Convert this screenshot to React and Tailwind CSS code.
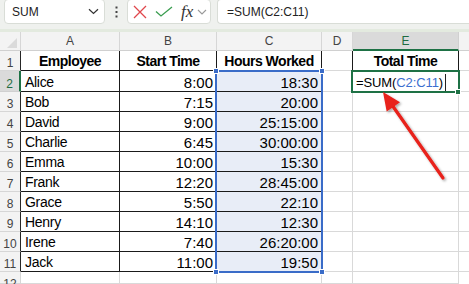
import React from "react";

const data = [
  ["Alice", "8:00", "18:30"],
  ["Bob", "7:15", "20:00"],
  ["David", "9:00", "25:15:00"],
  ["Charlie", "6:45", "30:00:00"],
  ["Emma", "10:00", "15:30"],
  ["Frank", "12:20", "28:45:00"],
  ["Grace", "5:50", "22:10"],
  ["Henry", "14:10", "12:30"],
  ["Irene", "7:40", "26:20:00"],
  ["Jack", "11:00", "19:50"],
];

function ColHead({ label }) {
  if (label === "E") {
    return (
      <div className="bg-[#dadada] border-r border-r-[#d0d0d0] border-b-2 border-b-[#1e7145] flex items-center justify-center text-[12px] leading-[14px] text-[#1e6b42]">
        E
      </div>
    );
  }
  return (
    <div className="bg-[#f3f3f3] border-r border-r-[#d6d6d6] border-b border-b-[#d0d0d0] flex items-center justify-center text-[12px] leading-[14px] text-[#444]">
      {label}
    </div>
  );
}

function RowHead({ n }) {
  if (n === 2) {
    return (
      <div className="bg-[#dadada] border-r-2 border-r-[#1e7145] border-b border-b-[#d0d0d0] flex items-end justify-center text-[12px] leading-[14px] text-[#1e6b42]">
        2
      </div>
    );
  }
  if (n <= 11) {
    return (
      <div className="bg-[#f3f3f3] border-r border-r-[#262626] border-b border-b-[#d6d6d6] flex items-end justify-center text-[12px] leading-[14px] text-[#444]">
        {n}
      </div>
    );
  }
  return (
    <div className="bg-[#f3f3f3] border-r border-r-[#d6d6d6] border-b border-b-[#d6d6d6] flex items-start pt-[5px] justify-center text-[12px] leading-[14px] text-[#444]">
      {n}
    </div>
  );
}

function TableHeadCell({ children }) {
  return (
    <div className="border-r border-b border-[#1a1a1a] flex items-end justify-center text-[14px] leading-[17px] font-bold tracking-[-0.5px] text-black whitespace-nowrap overflow-hidden">
      {children}
    </div>
  );
}

function NameCell({ children }) {
  return (
    <div className="border-r border-b border-[#1a1a1a] flex items-end pl-[4px] text-[14px] leading-[17px] tracking-[-0.3px] text-black whitespace-nowrap overflow-hidden">
      {children}
    </div>
  );
}

function NumCell({ children, sel }) {
  return (
    <div
      className={
        sel
          ? "bg-[#e8edf7] border-r border-b border-[#1a1a1a] flex items-end justify-end pr-[3px] text-[15px] leading-[17px] text-black whitespace-nowrap overflow-hidden"
          : "border-r border-b border-[#1a1a1a] flex items-end justify-end pr-[3px] text-[15px] leading-[17px] text-black whitespace-nowrap overflow-hidden"
      }
    >
      {children}
    </div>
  );
}

function Blank({ darkRight }) {
  return (
    <div
      className={
        darkRight
          ? "border-r border-r-[#1a1a1a] border-b border-b-[#d9d9d9]"
          : "border-r border-r-[#d9d9d9] border-b border-b-[#d9d9d9]"
      }
    />
  );
}

function Handle({ className }) {
  return (
    <div
      className={
        "absolute w-[6px] h-[6px] bg-[#3a6cc8] border border-white " + className
      }
    />
  );
}

export default function App() {
  const rows = [];
  rows.push(
    <React.Fragment key="r1">
      <RowHead n={1} />
      <TableHeadCell>Employee</TableHeadCell>
      <TableHeadCell>Start Time</TableHeadCell>
      <TableHeadCell>Hours Worked</TableHeadCell>
      <Blank darkRight />
      <div className="border-r border-r-[#1a1a1a] border-b border-b-[#d9d9d9] flex items-end justify-center text-[14px] leading-[17px] font-bold tracking-[-0.5px] text-black whitespace-nowrap">
        Total Time
      </div>
      <div className="border-b border-b-[#d9d9d9]" />
    </React.Fragment>
  );
  data.forEach((d, i) => {
    const n = i + 2;
    rows.push(
      <React.Fragment key={"r" + n}>
        <RowHead n={n} />
        <NameCell>{d[0]}</NameCell>
        <NumCell>{d[1]}</NumCell>
        <NumCell sel>{d[2]}</NumCell>
        <Blank />
        {n === 2 ? (
          <div className="border-r border-r-[#d9d9d9] border-b border-b-[#d9d9d9] flex items-end pl-[3px] text-[13px] leading-[17px] tracking-[-0.1px] text-black whitespace-nowrap overflow-hidden">
            <span>=SUM(</span>
            <span className="text-[#3b6fd0]">C2:C11</span>
            <span>)</span>
            <span className="ml-[2px] mb-[-1px] w-px h-[18px] bg-[#222]" />
          </div>
        ) : (
          <Blank />
        )}
        <div className="border-b border-b-[#d9d9d9]" />
      </React.Fragment>
    );
  });
  rows.push(
    <React.Fragment key="r12">
      <RowHead n={12} />
      <Blank />
      <Blank />
      <Blank />
      <Blank />
      <Blank />
      <div />
    </React.Fragment>
  );

  return (
    <div className="relative w-[469px] h-[284px] overflow-hidden bg-white font-['Liberation_Sans',Arial,sans-serif]">
      {/* Toolbar */}
      <div className="h-[29px] bg-[#eff1ee] flex items-start">
        <div className="ml-[4px] -mt-[1px] w-[101px] h-[25px] bg-white rounded-[4px] border border-[#d9ddd7] flex items-center justify-between pl-[7px] pr-[5px]">
          <span className="text-[12px] text-[#222] pt-[1px]">SUM</span>
          <svg width="11" height="7" viewBox="0 0 11 7">
            <path d="M1 1.2 L5.5 5.5 L10 1.2" fill="none" stroke="#333" strokeWidth="1.2" />
          </svg>
        </div>
        <div className="w-[22px] h-[24px] flex items-center justify-center">
          <svg width="3" height="12" viewBox="0 0 3 12">
            <rect x="0.5" y="0.5" width="2" height="2" fill="#444" />
            <rect x="0.5" y="5" width="2" height="2" fill="#444" />
            <rect x="0.5" y="9.5" width="2" height="2" fill="#444" />
          </svg>
        </div>
        <div className="-mt-[1px] w-[84px] h-[25px] bg-white rounded-[4px] border border-[#d9ddd7] flex items-center pl-[5px]">
          <svg width="14" height="14" viewBox="0 0 14 14" className="mt-[1px]">
            <path d="M1 1 L13 13 M13 1 L1 13" stroke="#e0474c" strokeWidth="1.3" fill="none" />
          </svg>
          <svg width="18" height="12" viewBox="0 0 18 12" className="ml-[8px] mt-[1px]">
            <path d="M1 5.5 L6 10 L17 1" stroke="#3a9d50" strokeWidth="1.3" fill="none" />
          </svg>
          <span className="ml-[8px] font-['Liberation_Serif',serif] italic text-[17px] leading-[18px] text-[#333]">
            fx
          </span>
          <svg width="10" height="6" viewBox="0 0 10 6" className="ml-[4px] mt-[1px]">
            <path d="M1 1 L5 5 L9 1" stroke="#999" strokeWidth="1.1" fill="none" />
          </svg>
        </div>
        <div className="ml-[6px] -mt-[1px] flex-1 h-[25px] bg-white rounded-l-[4px] border border-r-0 border-[#d9ddd7] flex items-center pl-[9px]">
          <span className="text-[12px] text-[#222] pt-[1px]">=SUM(C2:C11)</span>
        </div>
      </div>
      <div className="h-[3px] bg-[#e3eadf]" />

      {/* Grid */}
      <div className="grid grid-cols-[21px_99px_97px_105px_31px_106px_10px] grid-rows-[19px_20px_21px_repeat(9,20px)_12px]">
        <div className="relative bg-[#f3f3f3] border-r border-r-[#d6d6d6] border-b border-b-[#d0d0d0]">
          <svg width="21" height="19" viewBox="0 0 21 19" className="absolute inset-0">
            <path d="M17 6 L17 16 L7 16 Z" fill="#dadada" />
          </svg>
        </div>
        <ColHead label="A" />
        <ColHead label="B" />
        <ColHead label="C" />
        <ColHead label="D" />
        <ColHead label="E" />
        <div className="bg-[#f3f3f3] border-b border-b-[#d0d0d0]" />
        {rows}
      </div>

      {/* Selection range C2:C11 */}
      <div className="absolute left-[215px] top-[70px] w-[108px] h-[203px] border-2 border-[#3a6cc8]" />
      <Handle className="left-[213px] top-[68px]" />
      <Handle className="left-[319px] top-[68px]" />
      <Handle className="left-[213px] top-[269px]" />
      <Handle className="left-[319px] top-[269px]" />

      {/* Active cell E2 */}
      <div className="absolute left-[351px] top-[70px] w-[109px] h-[23px] border-2 border-[#1e7145]" />
      <div className="absolute left-[455px] top-[89px] w-[6px] h-[6px] bg-[#1e7145] border border-white" />

      {/* Red arrow */}
      <svg
        className="absolute left-0 top-0 pointer-events-none"
        width="469"
        height="284"
        viewBox="0 0 469 284"
      >
        <defs>
          <filter id="sh" x="-20%" y="-20%" width="140%" height="140%">
            <feDropShadow dx="1.5" dy="1.5" stdDeviation="1.2" floodColor="#000" floodOpacity="0.35" />
          </filter>
        </defs>
        <g filter="url(#sh)">
          <line x1="443" y1="178" x2="392" y2="105" stroke="#e8201a" strokeWidth="3.2" strokeLinecap="round" />
          <polygon points="383,92 400,102.2 386.7,111.4" fill="#e8201a" />
        </g>
      </svg>
    </div>
  );
}
